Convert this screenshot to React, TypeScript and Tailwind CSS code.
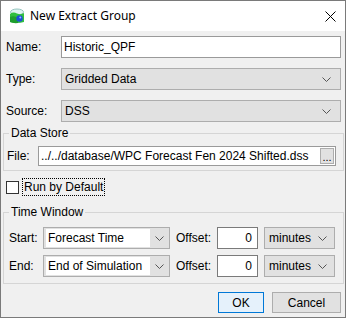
import type { ReactNode } from "react";

const font = { fontFamily: '"Liberation Sans", Arial, sans-serif' };

function Chevron() {
  return (
    <svg width="9" height="5" viewBox="0 0 9 5" className="shrink-0">
      <polyline points="0.5,0.5 4.5,4.5 8.5,0.5" fill="none" stroke="#555" strokeWidth="1" />
    </svg>
  );
}

function AppIcon() {
  return (
    <svg width="16" height="16" viewBox="0 0 16 16">
      <ellipse cx="8" cy="4" rx="6.5" ry="3" fill="#dff3f2" stroke="#7fb7b0" strokeWidth="0.8" />
      <path d="M1 6 Q4 3.5 8 5.5 Q12 7 15 5 L15 14 Q8 16 1 14 Z" fill="#2fbf3f" />
      <path d="M1 9 Q5 7 9 10 L9 15 Q4 15.5 1 14 Z" fill="#1e9e2e" />
      <circle cx="10.5" cy="10.5" r="3.2" fill="#1b4fd6" />
      <circle cx="11.3" cy="9.6" r="1" fill="#9bb6ff" />
    </svg>
  );
}

function Select({ value }: { value: string }) {
  return (
    <div className="flex h-[22px] flex-1 items-center border border-[#adadad] bg-[#e1e1e1] pl-[3px] pr-[9px]">
      <span className="flex-1 text-[12px] text-black">{value}</span>
      <Chevron />
    </div>
  );
}

function Combo({ value, w }: { value: string; w: string }) {
  return (
    <div className={`flex h-[22px] ${w} items-start border border-[#adadad] bg-[#e1e1e1] pl-[2px] pt-[1px]`}>
      <span className="flex h-[18px] w-[104px] items-center bg-white pl-[2px] text-[12px] text-black">{value}</span>
      <div className="flex h-[19px] flex-1 items-center justify-center">
        <Chevron />
      </div>
    </div>
  );
}

function Group({ title, children, className }: { title: string; children: ReactNode; className: string }) {
  return (
    <fieldset className={`border border-[#d5d5d5] ${className}`}>
      <legend className="ml-[5px] px-[2px] text-[12px] leading-[14px] text-black">{title}</legend>
      {children}
    </fieldset>
  );
}

function TimeRow({ label, value, className }: { label: string; value: string; className: string }) {
  return (
    <div className={`flex h-[22px] items-center ${className}`}>
      <span className="w-[39px] pl-[5px] text-[12px]">{label}</span>
      <Combo value={value} w="w-[127px]" />
      <span className="ml-[6px] w-[41px] text-[12px]">Offset:</span>
      <div className="flex h-[22px] w-[41px] items-center justify-end border border-[#7a7a7a] bg-white pr-[5px] text-[12px]">0</div>
      <div className="ml-[6px] flex h-[22px] w-[71px] items-center border border-[#adadad] bg-[#e1e1e1] pl-[4px] pr-[7px]">
        <span className="flex-1 text-[12px]">minutes</span>
        <Chevron />
      </div>
    </div>
  );
}

export default function App() {
  return (
    <div className="h-[319px] w-[347px] bg-white text-black" style={font}>
      <div className="flex h-[318px] w-[346px] flex-col border border-[#7a7a7a]">
        <div className="flex h-[30px] shrink-0 items-center bg-white">
          <div className="ml-[8px]">
            <AppIcon />
          </div>
          <span className="ml-[5px] flex-1 text-[12px]" style={{ fontFamily: '"Noto Sans", "Liberation Sans", sans-serif' }}>
            New Extract Group
          </span>
          <svg width="11" height="11" viewBox="0 0 11 11" className="mr-[9px]">
            <path d="M0.5 0.5 L10.5 10.5 M10.5 0.5 L0.5 10.5" stroke="#000" strokeWidth="1" />
          </svg>
        </div>

        <div className="flex flex-1 flex-col bg-[#f0f0f0] pl-[2px] pr-[1px]">
          <div className="mr-[3px] mt-[5px] flex h-[22px] items-center">
            <span className="w-[58px] pl-[3px] text-[12px]">Name:</span>
            <div className="flex h-[22px] flex-1 items-center border border-[#9a9a9a] bg-white pl-[2px] text-[12px]">Historic_QPF</div>
          </div>
          <div className="mr-[3px] mt-[10px] flex h-[22px] items-center">
            <span className="w-[58px] pl-[3px] text-[12px]">Type:</span>
            <Select value="Gridded Data" />
          </div>
          <div className="mr-[3px] mt-[10px] flex h-[22px] items-center">
            <span className="w-[58px] pl-[3px] text-[12px]">Source:</span>
            <Select value="DSS" />
          </div>

          <Group title="Data Store" className="mt-[4px] pb-[4px]">
            <div className="mt-[6px] flex h-[20px] items-center pr-[7px]">
              <span className="w-[34px] pl-[3px] text-[12px]">File:</span>
              <div className="flex h-[20px] flex-1 items-center border border-[#9a9a9a] bg-white pl-[2px] pr-[1px] text-[12px]">
                <span className="flex-1 whitespace-nowrap">../../database/WPC Forecast Fen 2024 Shifted.dss</span>
                <div className="flex h-[16px] w-[14px] items-end justify-center border border-[#adadad] bg-[#e1e1e1] text-[11px] leading-[12px]">...</div>
              </div>
            </div>
          </Group>

          <div className="mt-[7px] flex h-[18px] items-center">
            <div className="ml-[3px] h-[13px] w-[13px] border border-[#333] bg-white" />
            <div className="ml-[3px] flex h-[18px] items-center border border-dotted border-black px-[1px] text-[12px]">Run by Default</div>
          </div>

          <Group title="Time Window" className="mt-[9px] pb-[6px]">
            <TimeRow label="Start:" value="Forecast Time" className="mt-[8px]" />
            <TimeRow label="End:" value="End of Simulation" className="mt-[6px]" />
          </Group>

          <div className="mr-[3px] mt-[8px] flex justify-end gap-[8px]">
            <button className="h-[21px] w-[46px] border border-[#0078d7] bg-[#e5f1fb] text-[12px]">OK</button>
            <button className="h-[21px] w-[69px] border border-[#adadad] bg-[#e1e1e1] text-[12px]">Cancel</button>
          </div>
        </div>
      </div>
    </div>
  );
}
